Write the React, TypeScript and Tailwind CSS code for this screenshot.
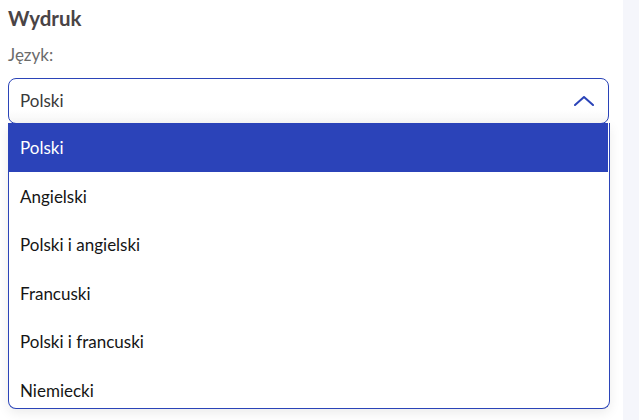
import { useState } from "react";

const languages = [
  "Polski",
  "Angielski",
  "Polski i angielski",
  "Francuski",
  "Polski i francuski",
  "Niemiecki",
];

export default function App() {
  const [selected, setSelected] = useState("Polski");

  return (
    <div className="flex h-[420px] w-full overflow-hidden bg-white font-['Lato',sans-serif]">
      <div className="flex-1 px-2 pt-[5px]">
        {/* Header */}
        <h2 className="text-[20.5px] leading-[26px] font-bold text-[#4a4446]">Wydruk</h2>
        <label className="mt-[14px] block text-[17px] leading-[20px] text-[#6b6b6b]">Język:</label>

        {/* Select */}
        <div className="relative mt-[13px] w-[601px]">
          <button className="flex h-[46px] w-full items-center justify-between rounded-lg border border-[#2b44b8] bg-gradient-to-b from-white from-70% to-[#f6f6f6] pr-[14px] pl-[11px] text-left text-[17px] text-[#3a3a3a]">
            <span>{selected}</span>
            <svg width="20" height="10" viewBox="0 0 20 10" fill="none">
              <path d="M1 9L10 1L19 9" stroke="#2b44b8" strokeWidth="2" strokeLinecap="round" strokeLinejoin="round" />
            </svg>
          </button>

          {/* Underlying fields */}
          <div className="mt-[32px] h-[40px] rounded-lg border border-gray-300" />
          <div className="mt-[150px] h-[60px] rounded-lg border border-gray-300" />

          {/* Dropdown list */}
          <ul className="absolute top-[45px] right-[-1px] left-0 h-[286px] overflow-hidden rounded-b-lg border border-t-0 border-[#2b44b8] bg-white shadow-[0_4px_12px_rgba(0,0,0,0.08)]">
            {languages.map((lang) => (
              <li
                key={lang}
                onClick={() => setSelected(lang)}
                className={`mr-[1px] flex h-[48.6px] cursor-pointer items-center px-[11px] pt-[1px] text-[17px] ${
                  lang === selected ? "bg-[#2b43b9] text-white" : "text-[#151515]"
                }`}
              >
                {lang}
              </li>
            ))}
          </ul>
        </div>
      </div>
      <div className="w-[16px] bg-[#f5f6fb]" />
    </div>
  );
}
